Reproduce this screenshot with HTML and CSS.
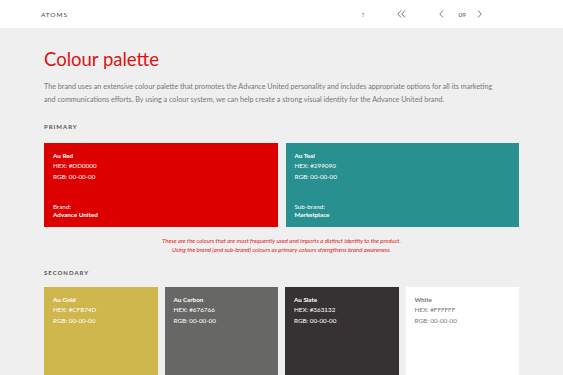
FILE: index.html
```html
<!DOCTYPE html>
<html lang="en">
<head>
<meta charset="utf-8">
<title>Colour palette</title>
<link rel="stylesheet" href="styles.css">
</head>
<body>
<header class="topbar">
  <div class="brand">ATOMS</div>
  <nav class="pager">
    <span class="help">?</span>
    <span class="first">
      <svg width="9" height="8" viewBox="0 0 9 8"><path d="M4 0.5 L0.8 4 L4 7.5 M8 0.5 L4.8 4 L8 7.5" fill="none" stroke="#555" stroke-width="0.8"/></svg>
    </span>
    <span class="prev">
      <svg width="5" height="8" viewBox="0 0 5 8"><path d="M4 0.5 L0.8 4 L4 7.5" fill="none" stroke="#555" stroke-width="0.8"/></svg>
    </span>
    <span class="num">09</span>
    <span class="next">
      <svg width="5" height="8" viewBox="0 0 5 8"><path d="M1 0.5 L4.2 4 L1 7.5" fill="none" stroke="#555" stroke-width="0.8"/></svg>
    </span>
  </nav>
</header>
<main class="content">
  <h1 class="title">Colour palette</h1>
  <p class="intro">The brand uses an extensive colour palette that promotes the Advance United personality and includes appropriate options for all its marketing and communications efforts. By using a colour system, we can help create a strong visual identity for the Advance United brand.</p>

  <h2 class="section">PRIMARY</h2>
  <div class="grid-primary">
    <div class="swatch red">
      <div class="info">
        <div class="name">Au Red</div>
        <div>HEX: #DD0000</div>
        <div>RGB: 00-00-00</div>
      </div>
      <div class="meta">
        <div>Brand:</div>
        <div class="name">Advance United</div>
      </div>
    </div>
    <div class="swatch teal">
      <div class="info">
        <div class="name">Au Teal</div>
        <div>HEX: #299090</div>
        <div>RGB: 00-00-00</div>
      </div>
      <div class="meta">
        <div>Sub-brand:</div>
        <div class="name">Marketplace</div>
      </div>
    </div>
  </div>
  <p class="note">These are the colours that are most frequently used and imports a distinct identity to the product.<br>Using the brand (and sub-brand) colours as primary colours strengthens brand awareness.</p>

  <h2 class="section second">SECONDARY</h2>
  <div class="grid-secondary">
    <div class="swatch small gold">
      <div class="info">
        <div class="name">Au Gold</div>
        <div>HEX: #CFB74D</div>
        <div>RGB: 00-00-00</div>
      </div>
    </div>
    <div class="swatch small carbon">
      <div class="info">
        <div class="name">Au Carbon</div>
        <div>HEX: #676766</div>
        <div>RGB: 00-00-00</div>
      </div>
    </div>
    <div class="swatch small slate">
      <div class="info">
        <div class="name">Au Slate</div>
        <div>HEX: #363132</div>
        <div>RGB: 00-00-00</div>
      </div>
    </div>
    <div class="swatch small white">
      <div class="info">
        <div class="name">White</div>
        <div>HEX: #FFFFFF</div>
        <div>RGB: 00-00-00</div>
      </div>
    </div>
  </div>
</main>
</body>
</html>
```

FILE: styles.css
```css
html, body {
  margin: 0;
  padding: 0;
}
body {
  background: #efefef;
  font-family: Lato, "Open Sans", sans-serif;
  color: #777;
  overflow: hidden;
}
.topbar {
  background: #fff;
  height: 28px;
  display: flex;
  align-items: center;
  padding: 0 0 0 41px;
}
.brand {
  font-size: 6.5px;
  letter-spacing: 0.9px;
  color: #444;
}
.pager {
  display: flex;
  align-items: center;
  margin-left: auto;
  font-size: 6.5px;
  color: #555;
}
.help {
  margin-right: 33px;
}
.first {
  display: flex;
  margin-right: 33px;
}
.prev {
  display: flex;
  margin-right: 14px;
}
.num {
  margin-right: 11px;
}
.next {
  display: flex;
  margin-right: 81px;
}
.content {
  width: 475px;
  margin: 0 auto;
}
.title {
  margin: 0;
  padding-top: 19px;
  font-size: 18.5px;
  font-weight: 400;
  color: #dd1111;
  line-height: 24px;
}
.intro {
  margin: 10px 0 0;
  max-width: 458px;
  font-size: 7.2px;
  line-height: 12.5px;
  color: #777;
}
.section {
  margin: 17px 0 0;
  font-size: 6px;
  font-weight: 700;
  letter-spacing: 1px;
  color: #555;
  line-height: 8px;
}
.section.second {
  margin-top: 15px;
}
.grid-primary {
  margin-top: 12px;
  display: grid;
  grid-template-columns: 1fr 1fr;
  gap: 8px;
}
.grid-secondary {
  margin-top: 10px;
  display: grid;
  grid-template-columns: repeat(4, 1fr);
  gap: 7px;
}
.swatch {
  height: 84px;
  box-sizing: border-box;
  padding: 8px 9px 8px;
  display: flex;
  flex-direction: column;
  justify-content: space-between;
  font-size: 6.3px;
  line-height: 10.3px;
  color: #fff;
}
.swatch.small {
  height: 88px;
}
.name {
  font-weight: 700;
}
.meta {
  line-height: 8px;
}
.red { background: #dd0000; }
.teal { background: #299090; }
.gold { background: #cfb74d; }
.carbon { background: #676766; }
.slate { background: #363132; }
.white { background: #fff; color: #777; }
.note {
  margin: 9px 0 0;
  text-align: center;
  font-style: italic;
  font-size: 5.95px;
  line-height: 9px;
  color: #dd2222;
}
```
